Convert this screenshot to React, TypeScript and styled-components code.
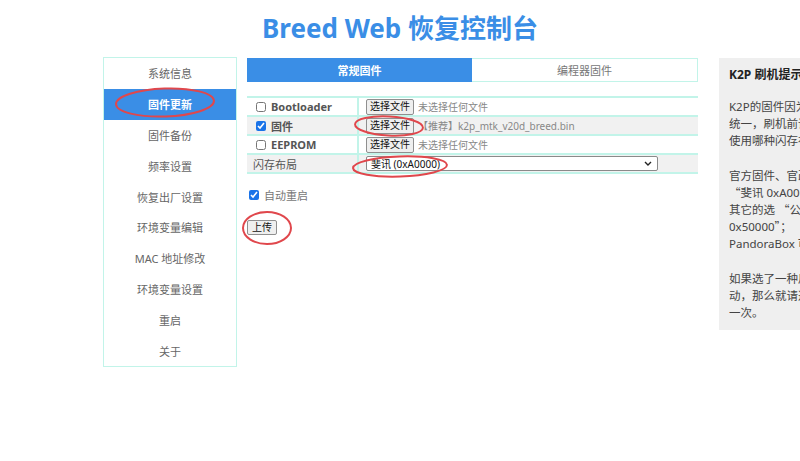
import React from 'react';
import styled, { createGlobalStyle } from 'styled-components';

const BLUE = '#3a8ee6';
const MINT = '#c2f4e9';

const GlobalStyle = createGlobalStyle`
  html, body {
    margin: 0;
    padding: 0;
    overflow: hidden;
    background: #fff;
  }
  body {
    font-family: "Noto Sans", "Noto Sans CJK SC", sans-serif;
    color: #666;
  }
`;

const Page = styled.div`
  position: relative;
  width: 800px;
  height: 461px;
  overflow: hidden;
`;

const Title = styled.h1`
  margin: 0;
  height: 57px;
  box-sizing: border-box;
  padding-top: 11px;
  text-align: center;
  font-size: 26px;
  line-height: 34px;
  font-weight: 700;
  color: ${BLUE};
`;

const Layout = styled.div`
  display: flex;
  align-items: flex-start;
  padding-left: 103px;
`;

const Sidebar = styled.nav`
  flex-shrink: 0;
  width: 134px;
  box-sizing: border-box;
  border: 1px solid ${MINT};
`;

const NavItem = styled.div<{ $active?: boolean }>`
  height: 30.8px;
  display: flex;
  align-items: center;
  justify-content: center;
  font-size: 11px;
  color: ${p => (p.$active ? '#fff' : '#666')};
  background: ${p => (p.$active ? BLUE : 'transparent')};
  font-weight: ${p => (p.$active ? 700 : 400)};
`;

const Main = styled.main`
  flex-shrink: 0;
  width: 451px;
  margin-left: 10px;
  padding-top: 1px;
`;

const Tabs = styled.div`
  display: flex;
  height: 24px;
`;

const Tab = styled.div<{ $active?: boolean }>`
  flex: 1;
  display: flex;
  align-items: center;
  justify-content: center;
  box-sizing: border-box;
  font-size: 11px;
  font-weight: ${p => (p.$active ? 700 : 400)};
  color: ${p => (p.$active ? '#fff' : '#777')};
  background: ${p => (p.$active ? BLUE : '#fff')};
  border: ${p => (p.$active ? 'none' : `1px solid ${MINT}`)};
  border-left: none;
`;

const Table = styled.div`
  margin-top: 14px;
  border-top: 2px solid ${MINT};
`;

const Row = styled.div<{ $shaded?: boolean }>`
  display: flex;
  height: 17px;
  border-bottom: 2px solid ${MINT};
  background: ${p => (p.$shaded ? '#f1f1f1' : '#fff')};
`;

const LabelCell = styled.div<{ $plain?: boolean }>`
  width: 112px;
  box-sizing: border-box;
  flex-shrink: 0;
  display: flex;
  align-items: center;
  gap: 5px;
  padding-left: ${p => (p.$plain ? 6 : 9)}px;
  border-right: 2px solid ${MINT};
  font-size: 11px;
  font-weight: ${p => (p.$plain ? 400 : 700)};
  color: #555;
`;

const ValueCell = styled.div`
  flex: 1;
  display: flex;
  align-items: center;
  gap: 4px;
  padding-left: 7px;
`;

const Check = styled.input.attrs({ type: 'checkbox' })`
  width: 10px;
  height: 10px;
  margin: 0;
  accent-color: #1a73e8;
`;

const FileButton = styled.button`
  font-family: inherit;
  font-size: 10px;
  line-height: 13px;
  padding: 0 3px;
  height: 16px;
  color: #111;
  background: #efefef;
  border: 1px solid #8f8f8f;
  border-radius: 2px;
`;

const FileName = styled.span`
  font-size: 10px;
  color: #888;
  white-space: nowrap;
`;

const SelectBox = styled.div`
  width: 292px;
  height: 15px;
  box-sizing: border-box;
  display: flex;
  align-items: center;
  justify-content: space-between;
  padding: 0 5px 0 4px;
  background: #fff;
  border: 1px solid #8a8a8a;
  border-radius: 2px;
  font-size: 10px;
  color: #111;
`;

const OptionRow = styled.label`
  display: flex;
  align-items: center;
  gap: 5px;
  margin: 14px 0 0 2px;
  height: 14px;
  font-size: 11px;
  color: #777;
`;

const UploadButton = styled(FileButton)`
  display: block;
  margin-top: 18px;
  height: 15px;
  padding: 0 4px;
`;

const Tips = styled.aside`
  flex-shrink: 0;
  width: 190px;
  margin: 1px 0 0 21px;
  padding: 8px 10px 9px;
  background: #efefef;
  color: #444;
`;

const TipsTitle = styled.h3`
  margin: 0 0 15px;
  font-size: 12px;
  line-height: 17px;
  font-weight: 700;
  color: #222;
  white-space: nowrap;
`;

const TipsText = styled.p`
  margin: 0 0 18px;
  font-size: 11.5px;
  line-height: 17px;
  white-space: nowrap;
  &:last-child {
    margin-bottom: 0;
  }
`;

/* full-width Chinese quotation marks */
const Quote = styled.span`
  font-family: "Noto Sans CJK SC", sans-serif;
`;

const Marks = styled.svg`
  position: absolute;
  top: 0;
  left: 0;
  pointer-events: none;
`;

const navItems = [
  '系统信息',
  '固件更新',
  '固件备份',
  '频率设置',
  '恢复出厂设置',
  '环境变量编辑',
  'MAC 地址修改',
  '环境变量设置',
  '重启',
  '关于',
];

const Chevron = () => (
  <svg width="8" height="5" viewBox="0 0 8 5">
    <path d="M1 1l3 3 3-3" fill="none" stroke="#222" strokeWidth="1.4" />
  </svg>
);

export default function App() {
  return (
    <Page>
      <GlobalStyle />
      <Title>Breed Web 恢复控制台</Title>
      <Layout>
        <Sidebar>
          {navItems.map(item => (
            <NavItem key={item} $active={item === '固件更新'}>
              {item}
            </NavItem>
          ))}
        </Sidebar>

        <Main>
          <Tabs>
            <Tab $active>常规固件</Tab>
            <Tab>编程器固件</Tab>
          </Tabs>

          <Table>
            <Row>
              <LabelCell>
                <Check />
                Bootloader
              </LabelCell>
              <ValueCell>
                <FileButton>选择文件</FileButton>
                <FileName>未选择任何文件</FileName>
              </ValueCell>
            </Row>
            <Row $shaded>
              <LabelCell>
                <Check defaultChecked />
                固件
              </LabelCell>
              <ValueCell>
                <FileButton>选择文件</FileButton>
                <FileName>【推荐】k2p_mtk_v20d_breed.bin</FileName>
              </ValueCell>
            </Row>
            <Row>
              <LabelCell>
                <Check />
                EEPROM
              </LabelCell>
              <ValueCell>
                <FileButton>选择文件</FileButton>
                <FileName>未选择任何文件</FileName>
              </ValueCell>
            </Row>
            <Row $shaded>
              <LabelCell $plain>闪存布局</LabelCell>
              <ValueCell>
                <SelectBox>
                  <span>斐讯 (0xA0000)</span>
                  <Chevron />
                </SelectBox>
              </ValueCell>
            </Row>
          </Table>

          <OptionRow>
            <Check defaultChecked />
            自动重启
          </OptionRow>
          <UploadButton>上传</UploadButton>
        </Main>

        <Tips>
          <TipsTitle>K2P 刷机提示</TipsTitle>
          <TipsText>
            K2P的固件因为闪存布局不
            <br />
            统一，刷机前请确认需要
            <br />
            使用哪种闪存布局。
          </TipsText>
          <TipsText>
            官方固件、官改固件选择
            <br />
            <Quote>“</Quote>斐讯 0xA0000<Quote>”</Quote>；
            <br />
            其它的选 <Quote>“</Quote>公版
            <br />
            0x50000<Quote>”</Quote>；
            <br />
            PandoraBox 可选任意一种。
          </TipsText>
          <TipsText>
            如果选了一种后刷机不能启
            <br />
            动，那么就请选另一种再刷
            <br />
            一次。
          </TipsText>
        </Tips>
      </Layout>

      <Marks width="800" height="461" viewBox="0 0 800 461">
        <g fill="none" stroke="#e0474c" strokeWidth="2">
          <ellipse cx="165" cy="102.5" rx="49" ry="14" transform="rotate(-2 165 102.5)" />
          <ellipse cx="389" cy="126" rx="34" ry="9.5" transform="rotate(3 389 126)" />
          <ellipse cx="400" cy="166.5" rx="47" ry="10" transform="rotate(-2 400 166.5)" />
          <ellipse cx="267" cy="228" rx="24" ry="16" />
        </g>
      </Marks>
    </Page>
  );
}
